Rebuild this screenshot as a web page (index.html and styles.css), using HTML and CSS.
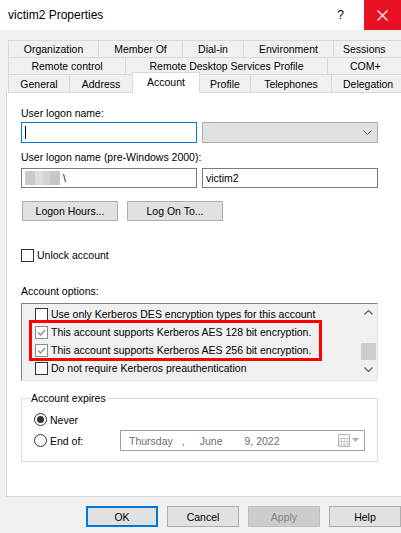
FILE: index.html
```html
<!DOCTYPE html>
<html lang="en">
<head>
    <meta charset="UTF-8">
    <meta name="viewport" content="width=device-width, initial-scale=1.0">
    <title>victim2 Properties</title>
    <link rel="stylesheet" href="styles.css">
</head>
<body>

<div class="window">
    <div class="titlebar">
        <span class="title">victim2 Properties</span>
        <span class="help">?</span>
        <span class="close">
            <svg width="11" height="11" viewBox="0 0 11 11"><path d="M0.5 0.5 L10.5 10.5 M10.5 0.5 L0.5 10.5" stroke="#fff" stroke-width="1.2" fill="none"/></svg>
        </span>
    </div>

    <!-- Tabs -->
    <div class="tabs">
        <div class="tab-row row1">
            <div class="tab">Organization</div>
            <div class="tab">Member Of</div>
            <div class="tab">Dial-in</div>
            <div class="tab">Environment</div>
            <div class="tab">Sessions</div>
        </div>
        <div class="tab-row row2">
            <div class="tab">Remote control</div>
            <div class="tab">Remote Desktop Services Profile</div>
            <div class="tab">COM+</div>
        </div>
        <div class="tab-row row3">
            <div class="tab">General</div>
            <div class="tab">Address</div>
            <div class="tab active">Account</div>
            <div class="tab">Profile</div>
            <div class="tab">Telephones</div>
            <div class="tab">Delegation</div>
        </div>
    </div>

    <div class="panel">
        <div class="label first">User logon name:</div>
        <div class="field-row">
            <div class="textbox focused"><span class="caret"></span></div>
            <div class="combo">
                <svg width="9" height="5" viewBox="0 0 9 5"><path d="M0.5 0.5 L4.5 4.5 L8.5 0.5" stroke="#606060" fill="none"/></svg>
            </div>
        </div>

        <div class="label second">User logon name (pre-Windows 2000):</div>
        <div class="field-row short">
            <div class="textbox">
                <span class="blur b1"></span><span class="blur b2"></span><span class="blur b3"></span><span class="blur b4"></span>
                <span class="slash">\</span>
            </div>
            <div class="textbox">victim2</div>
        </div>

        <div class="button-row">
            <button class="btn">Logon Hours...</button>
            <button class="btn">Log On To...</button>
        </div>

        <label class="check unlock"><span class="box"></span>Unlock account</label>

        <div class="label options">Account options:</div>
        <div class="listbox">
            <div class="items">
                <div class="item"><span class="box"></span><span class="focus-text">Use only Kerberos DES encryption types for this account</span></div>
                <div class="item"><span class="box checked"><svg width="11" height="11" viewBox="0 0 11 11"><path d="M2 5.5 L4.5 8 L9 3" stroke="#8a8a8a" stroke-width="1.3" fill="none"/></svg></span>This account supports Kerberos AES 128 bit encryption.</div>
                <div class="item"><span class="box checked"><svg width="11" height="11" viewBox="0 0 11 11"><path d="M2 5.5 L4.5 8 L9 3" stroke="#8a8a8a" stroke-width="1.3" fill="none"/></svg></span>This account supports Kerberos AES 256 bit encryption.</div>
                <div class="item"><span class="box"></span>Do not require Kerberos preauthentication</div>
            </div>
            <div class="scrollbar">
                <svg class="arrow" width="9" height="5" viewBox="0 0 9 5"><path d="M0.5 4.5 L4.5 0.5 L8.5 4.5" stroke="#606060" stroke-width="1.2" fill="none"/></svg>
                <div class="thumb"></div>
                <svg class="arrow" width="9" height="5" viewBox="0 0 9 5"><path d="M0.5 0.5 L4.5 4.5 L8.5 0.5" stroke="#606060" stroke-width="1.2" fill="none"/></svg>
            </div>
            <div class="highlight"></div>
        </div>

        <fieldset class="expires">
            <legend>Account expires</legend>
            <div class="radio-row"><span class="radio on"></span>Never</div>
            <div class="radio-row">
                <span class="radio"></span><span class="end-label">End of:</span>
                <div class="datepicker">
                    <span class="d-day">Thursday</span>
                    <span class="d-comma">,</span>
                    <span class="d-month">June</span>
                    <span class="d-date">9, 2022</span>
                    <svg class="cal" width="22" height="13" viewBox="0 0 22 13">
                        <rect x="0.5" y="0.5" width="11" height="12" fill="#fafafa" stroke="#b5b5b5"/>
                        <path d="M1 4.5 H11 M1 7.5 H11 M1 10.5 H11 M3.5 4 V12 M6.5 4 V12 M9.5 4 V12" stroke="#d0d0d0"/>
                        <path d="M14 4 L21 4 L17.5 8 Z" fill="#b0b0b0"/>
                    </svg>
                </div>
            </div>
        </fieldset>
    </div>

    <div class="buttons">
        <button class="btn default">OK</button>
        <button class="btn">Cancel</button>
        <button class="btn disabled">Apply</button>
        <button class="btn">Help</button>
    </div>
</div>

</body>
</html>
```

FILE: styles.css
```css
body {
    margin: 0;
    padding: 0;
    background-color: #f0f0f0;
    font-family: "Liberation Sans", Arial, sans-serif;
    font-size: 10.5px;
    color: #000;
    overflow: hidden;
}
.window {
    width: 401px;
    height: 533px;
    overflow: hidden;
}
.titlebar {
    display: flex;
    align-items: center;
    height: 30px;
    background-color: #fff;
}
.title {
    padding-left: 8px;
    font-size: 12px;
}
.help {
    margin-left: auto;
    margin-right: 20px;
    font-size: 12px;
}
.close {
    width: 37px;
    height: 30px;
    background-color: #e81123;
    display: flex;
    align-items: center;
    justify-content: center;
}
.tabs {
    padding: 10px 0 0 8px;
    width: 420px;
}
.tab-row {
    display: grid;
    margin-bottom: -1px;
}
.row1 {
    grid-template-columns: 90px 84px 61px 90px 1fr;
}
.row2 {
    grid-template-columns: 117px 202px 1fr;
}
.row3 {
    grid-template-columns: 61px 63px 67px 51px 81px 1fr;
}
.tab {
    height: 16px;
    line-height: 16px;
    border: 1px solid #d9d9d9;
    margin-right: -1px;
    background-color: #f0f0f0;
    text-align: center;
    white-space: nowrap;
}
.row1 .tab:last-child {
    text-align: left;
    padding-left: 9px;
}
.row2 .tab:last-child {
    text-align: left;
    padding-left: 22px;
}
.row3 .tab:last-child {
    text-align: left;
    padding-left: 11px;
}
.row3 .tab {
    height: 17px;
    line-height: 18px;
}
.tab.active {
    position: relative;
    z-index: 1;
    margin-top: -2px;
    height: 20px;
    line-height: 18px;
    background-color: #fff;
    border-bottom: none;
}
.panel {
    position: relative;
    margin-left: 6px;
    width: 420px;
    height: 405px;
    box-sizing: border-box;
    border: 1px solid #d9d9d9;
    background-color: #fff;
    padding: 13px 0 0 14px;
}
.label {
    line-height: 14px;
    height: 14px;
}
.field-row {
    display: flex;
    gap: 5px;
    margin-top: 2px;
}
.textbox {
    width: 176px;
    height: 21px;
    box-sizing: border-box;
    border: 1px solid #7a7a7a;
    background-color: #fff;
    display: flex;
    align-items: center;
    padding-left: 3px;
}
.textbox.focused {
    border-color: #0078d7;
}
.caret {
    width: 1px;
    height: 13px;
    background-color: #000;
}
.combo {
    width: 176px;
    height: 21px;
    box-sizing: border-box;
    border: 1px solid #adadad;
    background-color: #e1e1e1;
    display: flex;
    align-items: center;
    justify-content: flex-end;
    padding-right: 5px;
}
.label.second {
    margin-top: 7px;
}
.field-row.short {
    margin-top: 4px;
}
.field-row.short .textbox {
    height: 20px;
}
.blur {
    display: inline-block;
    height: 14px;
}
.b1 { width: 10px; background-color: #c9c9c9; }
.b2 { width: 8px; background-color: #dedede; }
.b3 { width: 7px; background-color: #d4d4d4; }
.b4 { width: 10px; background-color: #c6c6c6; }
.slash {
    margin-left: 3px;
}
.button-row {
    display: flex;
    gap: 9px;
    margin-top: 13px;
    padding-left: 1px;
}
.btn {
    font-family: "Liberation Sans", Arial, sans-serif;
    font-size: 10.5px;
    color: #000;
    height: 20px;
    padding: 0;
    border: 1px solid #adadad;
    background-color: #e1e1e1;
}
.button-row .btn {
    width: 96px;
}
.check {
    display: flex;
    align-items: center;
    line-height: 14px;
}
.unlock {
    margin-top: 27px;
}
.box {
    width: 13px;
    height: 13px;
    box-sizing: border-box;
    border: 1px solid #333;
    background-color: #fff;
    margin-right: 3px;
    display: flex;
    align-items: center;
    justify-content: center;
    flex: none;
}
.box.checked {
    border-color: #8a8a8a;
}
.label.options {
    margin-top: 22px;
}
.listbox {
    position: relative;
    margin-top: 5px;
    width: 357px;
    height: 78px;
    box-sizing: border-box;
    border: 1px solid #e3e3e3;
    border-top-color: #828282;
    border-left-color: #828282;
    background-color: #f0f0f0;
    display: flex;
    overflow: hidden;
}
.items {
    flex: 1;
    padding: 1px 0 0 13px;
}
.item {
    height: 18px;
    display: flex;
    align-items: center;
    white-space: nowrap;
}
.scrollbar {
    width: 17px;
    display: flex;
    flex-direction: column;
    align-items: center;
    padding-top: 6px;
}
.thumb {
    width: 15px;
    height: 17px;
    background-color: #cdcdcd;
    margin: 28px 0 7px;
}
.highlight {
    position: absolute;
    left: 7px;
    top: 16px;
    width: 287px;
    height: 35px;
    border: 3px solid #f00;
}
.expires {
    margin: 10px 0 0 0;
    width: 357px;
    height: 71px;
    box-sizing: border-box;
    border: 1px solid #dcdcdc;
    padding: 4px 0 0 12px;
}
.expires legend {
    padding: 0 1px;
    margin-left: -4px;
    line-height: 14px;
}
.radio-row {
    display: flex;
    align-items: center;
    height: 21px;
}
.radio {
    width: 13px;
    height: 13px;
    box-sizing: border-box;
    border: 1px solid #333;
    border-radius: 50%;
    background-color: #fff;
    margin-right: 3px;
    display: flex;
    align-items: center;
    justify-content: center;
}
.radio.on::after {
    content: "";
    width: 7px;
    height: 7px;
    border-radius: 50%;
    background-color: #333;
}
.end-label {
    width: 70px;
}
.datepicker {
    width: 245px;
    height: 21px;
    box-sizing: border-box;
    border: 1px solid #a0a0a0;
    background-color: #fff;
    color: #6d6d6d;
    display: flex;
    align-items: center;
    padding-left: 8px;
}
.d-comma {
    margin-left: 9px;
}
.d-month {
    margin-left: 15px;
}
.d-date {
    margin-left: 22px;
}
.cal {
    margin-left: auto;
    margin-right: 4px;
}
.buttons {
    display: flex;
    gap: 9px;
    justify-content: flex-end;
    margin-top: 9px;
    padding-right: 0;
}
.buttons .btn {
    width: 72px;
    height: 21px;
}
.btn.default {
    border: 2px solid #0078d7;
}
.btn.disabled {
    background-color: #cccccc;
    border-color: #bfbfbf;
    color: #838383;
}
```
